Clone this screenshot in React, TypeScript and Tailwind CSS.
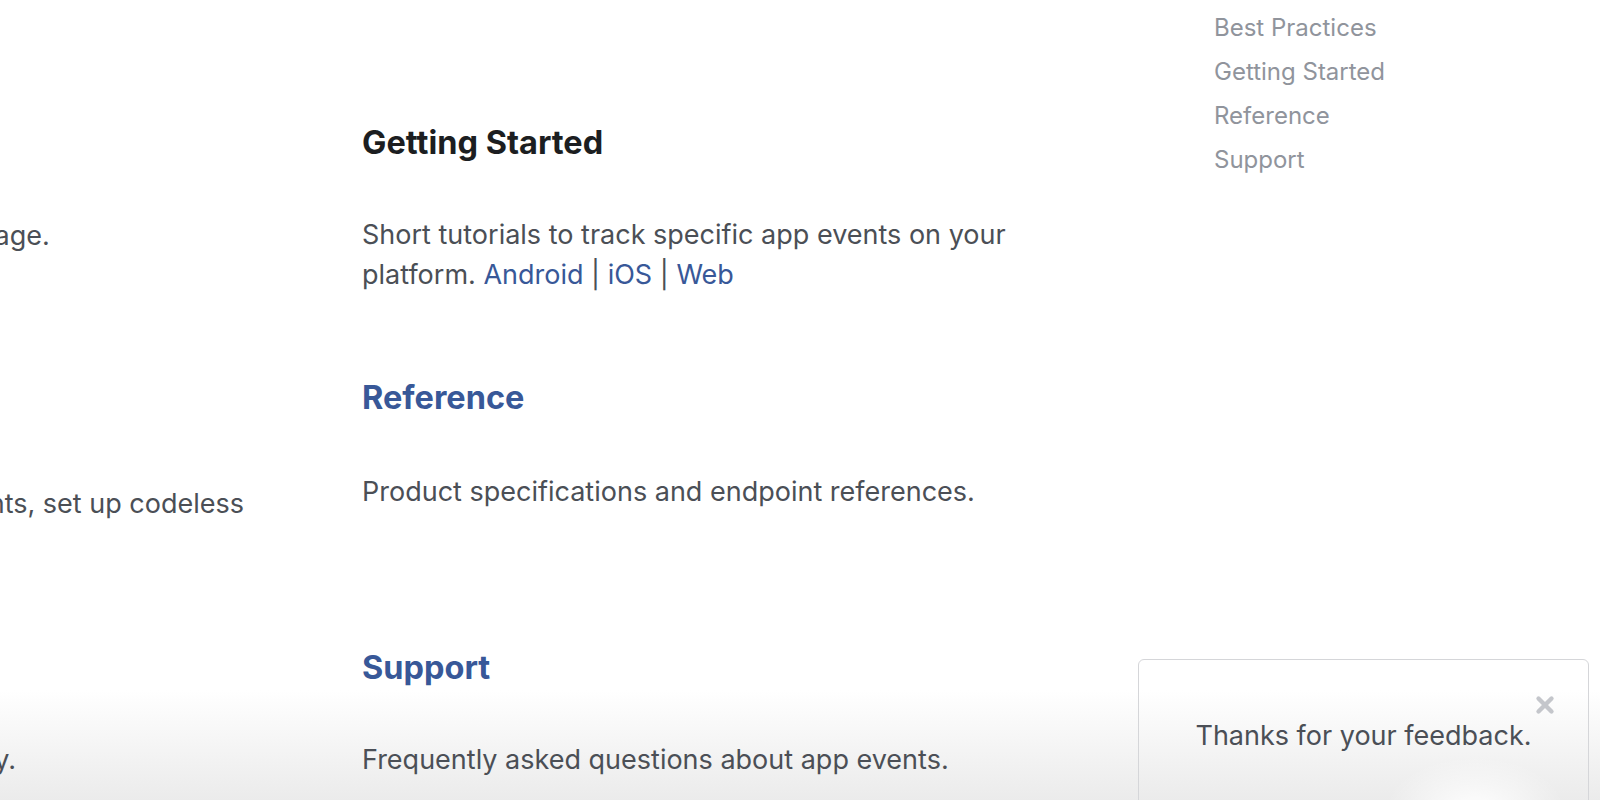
import { X } from "lucide-react";

const sections = [
  {
    title: "Getting Started",
    link: false,
    top: "mt-[123px]",
    gap: "mt-[52px]",
    body: (
      <>
        Short tutorials to track specific app events on your platform.{" "}
        <a className="text-[#385898]">Android</a> | <a className="text-[#385898]">iOS</a> |{" "}
        <a className="text-[#385898]">Web</a>
      </>
    ),
  },
  {
    title: "Reference",
    link: true,
    top: "mt-[83px]",
    gap: "mt-[54px]",
    body: <>Product specifications and endpoint references.</>,
  },
  {
    title: "Support",
    link: true,
    top: "mt-[136px]",
    gap: "mt-[52px]",
    body: <>Frequently asked questions about app events.</>,
  },
];

const navItems = ["Best Practices", "Getting Started", "Reference", "Support"];

export default function App() {
  return (
    <div className="relative h-[800px] w-[1600px] overflow-hidden bg-[radial-gradient(ellipse_90px_55px_at_1475px_812px,#ffffff_0%,rgba(255,255,255,0)_100%),linear-gradient(180deg,#ffffff_0px,#ffffff_690px,#ebebeb_800px)] font-['Inter',sans-serif] text-[#4b4f56]">
      <div className="flex">
        {/* left column, mostly scrolled out of view */}
        <div className="-ml-[359px] w-[665px] shrink-0 text-[27px] leading-[40px]">
          <p className="mt-[216px] whitespace-nowrap">Track events on your web page.</p>
          <p className="mt-[228px] whitespace-nowrap">Learn how to track app events, set up codeless</p>
          <p className="ml-[14px] mt-[216px] whitespace-nowrap">Using app events efficiently.</p>
        </div>

        <main className="ml-[56px] w-[680px] shrink-0">
          {sections.map((s) => (
            <section key={s.title} className={s.top}>
              <h2
                className={`text-[32.5px] font-bold leading-[40px] ${
                  s.link ? "text-[#385898]" : "text-[#1c1e21]"
                }`}
              >
                {s.title}
              </h2>
              <p className={`${s.gap} text-[27px] leading-[40px]`}>{s.body}</p>
            </section>
          ))}
        </main>

        <nav className="ml-[172px] mt-[6px] flex flex-col text-[24px] leading-[44px] text-[#90949c]">
          {navItems.map((n) => (
            <a key={n}>{n}</a>
          ))}
        </nav>
      </div>

      {/* feedback toast */}
      <div className="absolute left-[1138px] right-[11px] top-[659px] h-[180px] rounded-[6px] border border-[#d5d6d9]">
        <button className="absolute right-[30px] top-[32px] text-[#c4c6cb]">
          <X size={26} strokeWidth={4} />
        </button>
        <p className="mt-[56px] text-center text-[27px] leading-[40px]">Thanks for your feedback.</p>
      </div>
    </div>
  );
}
